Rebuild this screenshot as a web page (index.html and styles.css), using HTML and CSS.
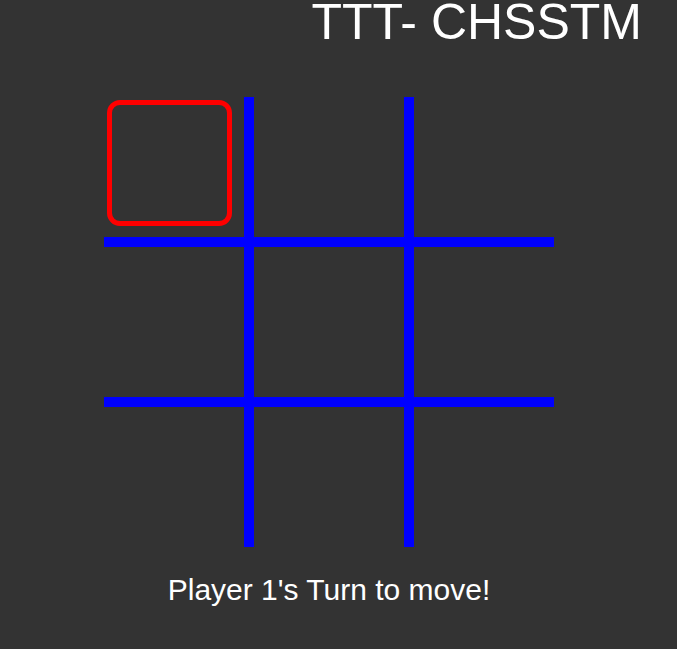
FILE: index.html
```html
<!DOCTYPE html>
<html>
<head>
<meta charset="utf-8">
<link rel="stylesheet" href="styles.css">
</head>
<body>
<header class="header"><h1 class="title">TTT- CHSSTM</h1></header>
<main class="game">
  <div class="board">
    <div class="cell"><div class="cursor"></div></div>
    <div class="cell"></div>
    <div class="cell"></div>
    <div class="cell"></div>
    <div class="cell"></div>
    <div class="cell"></div>
    <div class="cell"></div>
    <div class="cell"></div>
    <div class="cell"></div>
  </div>
  <p class="status">Player 1's Turn to move!</p>
</main>
</body>
</html>
```
FILE: styles.css
```css
html, body {
  margin: 0;
  padding: 0;
  background: #333333;
  color: #ffffff;
  font-family: "Liberation Sans", Arial, sans-serif;
}
.header {
  height: 97px;
  padding-right: 35px;
  text-align: right;
}
.title {
  margin: 0;
  font-size: 50px;
  font-weight: normal;
  line-height: 44px;
}
.game {
  width: 450px;
  margin-left: 104px;
  display: flex;
  flex-direction: column;
  align-items: center;
}
.board {
  display: grid;
  grid-template-columns: 140px 150px 140px;
  grid-template-rows: 140px 150px 140px;
  gap: 10px;
  background: #0000ff;
}
.cell {
  background: #333333;
}
.cursor {
  margin: 3px 0 0 3px;
  width: 125px;
  height: 126px;
  box-sizing: border-box;
  border: 5px solid #ff0000;
  border-radius: 13px;
}
.status {
  margin: 25px 0 0;
  font-size: 30px;
  line-height: 36px;
}
```
